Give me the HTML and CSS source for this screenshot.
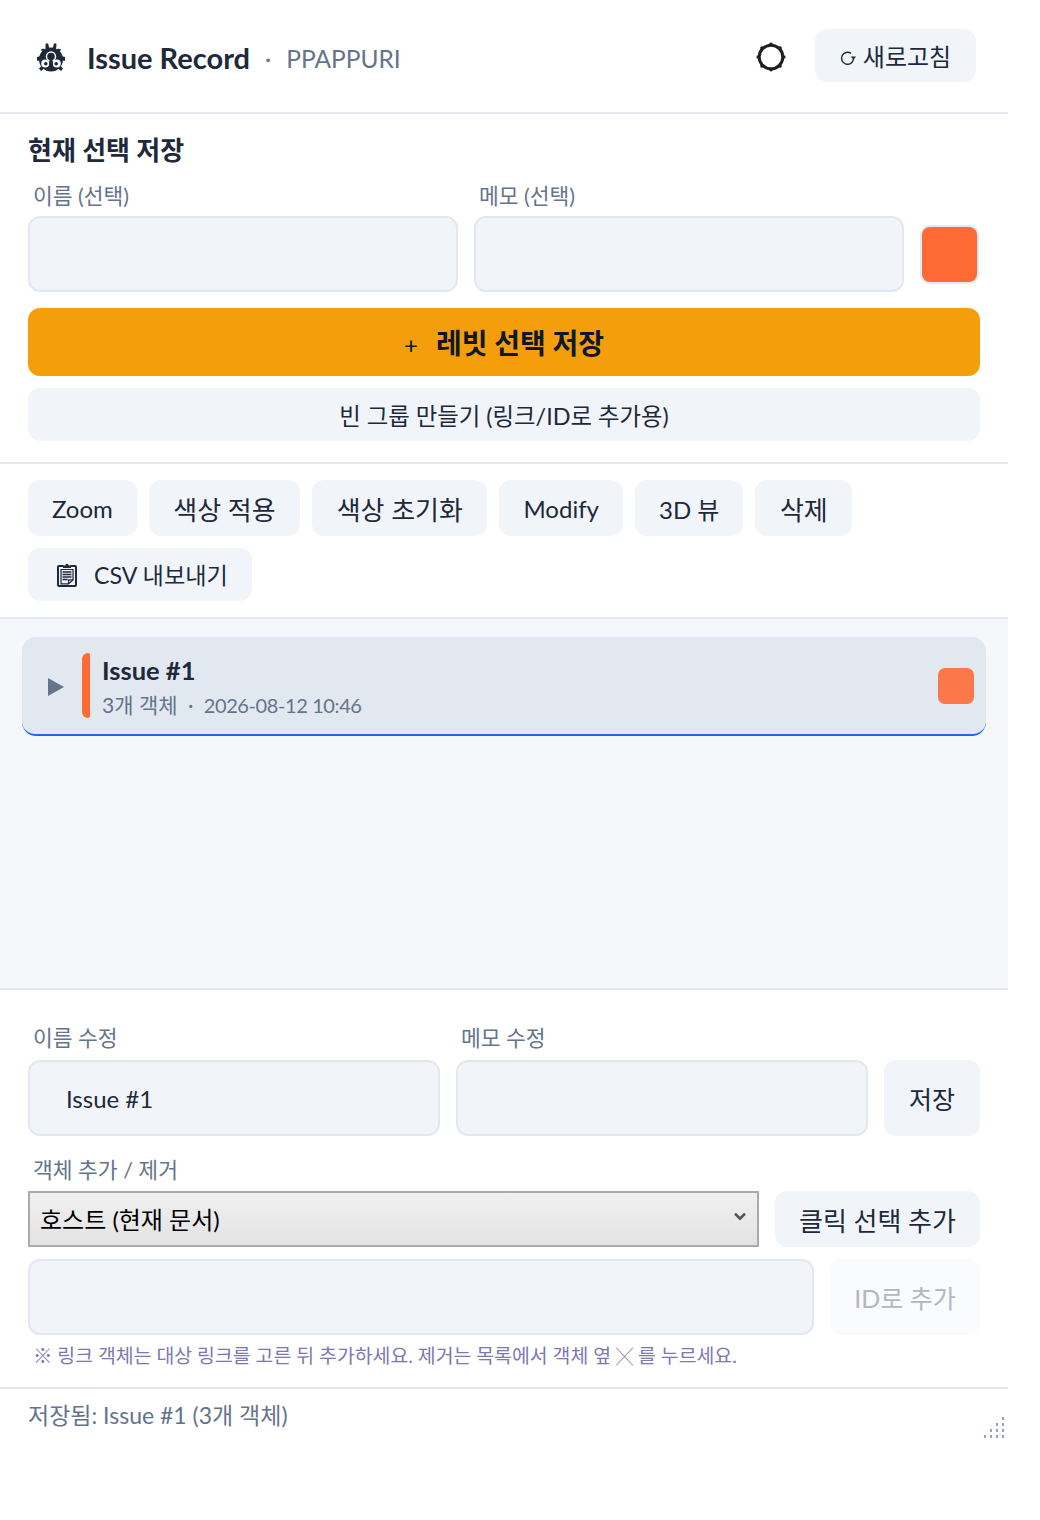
FILE: index.html
```html
<!DOCTYPE html>
<html lang="ko">

<head>
  <meta charset="utf-8">
  <title>Issue Record</title>
  <link rel="stylesheet" href="styles.css">
</head>

<body>
  <div id="panel">
    <header class="app-header">
      <svg class="bug-icon" viewBox="0 0 30 30" fill="#1e293b">
        <circle cx="15" cy="16.500" r="12" />
        <circle cx="11" cy="1.800" r="1.500" />
        <circle cx="19" cy="1.800" r="1.500" />
        <path d="M9.500 2.500h3l1 3h3l1-3h3l-1 6h-10z" />
        <path d="M5 6.500l3-1 2 3-3 2zM25 6.500l-3-1-2 3 3 2zM1 14l4-1 1 4-5 1zM29 14l-4-1-1 4 5 1zM3 25.500l3-3 2 3-3 2.500zM27 25.500l-3-3-2 3 3 2.500z" />
        <g fill="#fff">
          <circle cx="9.200" cy="20.500" r="4" />
          <circle cx="20.800" cy="20.500" r="4" />
          <circle cx="15" cy="13.500" r="5.200" />
        </g>
        <circle cx="15" cy="13.500" r="3.800" />
        <path d="M13.500 14h3v13h-3z" />
        <circle cx="9.800" cy="20.800" r="1.800" />
        <circle cx="20.200" cy="20.800" r="1.800" />
      </svg>
      <span class="app-title">Issue Record</span>
      <span class="app-dot">·</span>
      <span class="app-doc">PPAPPURI</span>
      <svg class="theme-icon" viewBox="0 0 30 30" fill="none">
        <circle cx="15" cy="15" r="11.800" stroke="#1f1f1f" stroke-width="3" />
        <g fill="#1f1f1f">
          <circle cx="15" cy="2.200" r="1.800" />
          <circle cx="24.050" cy="5.950" r="1.800" />
          <circle cx="27.800" cy="15" r="1.800" />
          <circle cx="24.050" cy="24.050" r="1.800" />
          <circle cx="15" cy="27.800" r="1.800" />
          <circle cx="5.950" cy="24.050" r="1.800" />
          <circle cx="2.200" cy="15" r="1.800" />
          <circle cx="5.950" cy="5.950" r="1.800" />
        </g>
      </svg>
      <button class="btn refresh-btn">
        <svg class="refresh-icon" viewBox="0 0 16 16" fill="none" stroke="#1e293b" stroke-width="1.400">
          <path d="M13.500 9A6 6 0 1 1 11 3.400" />
          <path d="M10.800 6.600H16L13.500 10z" fill="#1e293b" stroke="none" />
        </svg>
        새로고침
      </button>
    </header>

    <section class="save-section">
      <h2 class="section-title">현재 선택 저장</h2>
      <div class="field-row">
        <label class="field">
          <span class="field-label">이름 (선택)</span>
          <input type="text" class="text-input">
        </label>
        <label class="field">
          <span class="field-label">메모 (선택)</span>
          <input type="text" class="text-input">
        </label>
        <span class="color-swatch"></span>
      </div>
      <button class="btn primary-btn"><span class="plus">+</span>레빗 선택 저장</button>
      <button class="btn group-btn">빈 그룹 만들기 (링크/ID로 추가용)</button>
    </section>

    <section class="toolbar">
      <button class="btn tool-btn tool-latin">Zoom</button>
      <button class="btn tool-btn">색상 적용</button>
      <button class="btn tool-btn">색상 초기화</button>
      <button class="btn tool-btn tool-latin">Modify</button>
      <button class="btn tool-btn tool-latin">3D 뷰</button>
      <button class="btn tool-btn">삭제</button>
      <button class="btn tool-btn csv-btn">
        <svg class="clip-icon" viewBox="0 0 20 24" fill="none" stroke="#1e293b" stroke-width="2">
          <path d="M6.500 3H2a1 1 0 0 0-1 1v18a1 1 0 0 0 1 1h16a1 1 0 0 0 1-1V4a1 1 0 0 0-1-1h-4.500" />
          <path d="M6 5h8V2.400h-2.300a1.700 1.700 0 0 0-3.400 0H6z" fill="#1e293b" stroke="none" />
          <path d="M4 6.500h12v10.500l-4.500 3.800H4z" stroke-width="1.200" />
          <path d="M5.500 9h9M5.500 11.500h9M5.500 14h9M5.500 16.500h5" stroke-width="1.300" />
          <path d="M11.500 20.800v-4h4.500" stroke-width="1.200" />
        </svg>
        CSV 내보내기
      </button>
    </section>

    <section class="issue-list">
      <article class="issue-card">
        <span class="issue-arrow"></span>
        <span class="issue-bar"></span>
        <div class="issue-text">
          <div class="issue-name">Issue #1</div>
          <div class="issue-meta">3개 객체 <span class="meta-dot">·</span> <span class="issue-date">2026-08-12 10:46</span></div>
        </div>
        <span class="issue-swatch"></span>
      </article>
    </section>

    <section class="edit-section">
      <div class="edit-row">
        <label class="field">
          <span class="field-label edit-label">이름 수정</span>
          <input type="text" class="text-input name-input" value="Issue #1">
        </label>
        <label class="field">
          <span class="field-label edit-label">메모 수정</span>
          <input type="text" class="text-input">
        </label>
        <button class="btn save-btn">저장</button>
      </div>
      <div class="field-label object-label">객체 추가 / 제거</div>
      <div class="select-row">
        <div class="select-wrap">
          <select class="doc-select">
            <option>호스트 (현재 문서)</option>
          </select>
          <svg class="select-chevron" viewBox="0 0 12 8" fill="none" stroke="#555" stroke-width="2.600">
            <path d="M1 1.200l5 5 5-5" />
          </svg>
        </div>
        <button class="btn pick-btn">클릭 선택 추가</button>
      </div>
      <div class="id-row">
        <input type="text" class="text-input id-input">
        <button class="btn id-btn" disabled>ID로 추가</button>
      </div>
      <p class="hint">※ 링크 객체는 대상 링크를 고른 뒤 추가하세요. 제거는 목록에서 객체 옆 <span class="hint-x">╳</span> 를 누르세요.</p>
    </section>

    <footer class="status-bar">저장됨: Issue #1 (3개 객체)</footer>
    <svg class="resize-grip" viewBox="0 0 22 22" fill="#94a3c4">
      <path d="M19 1h2v3h-2zM19 7h2v3h-2zM13 7h2v3h-2zM19 13h2v3h-2zM13 13h2v3h-2zM7 13h2v3H7zM19 19h2v3h-2zM13 19h2v3h-2zM7 19h2v3H7zM1 19h2v3H1z" />
    </svg>
  </div>
</body>

</html>
```

FILE: styles.css
```css
* {
  box-sizing: border-box;
}

body {
  margin: 0;
  background-color: #FFF;
  color: #1E293B;
  font-family: Lato, "Noto Sans CJK KR", sans-serif;
}

#panel {
  position: relative;
  width: 1008px;
  height: 1520px;
}

button,
input,
select {
  font-family: inherit;
}

.btn {
  border: none;
  border-radius: 12px;
  background-color: #F1F5F9;
  color: #1E293B;
  font-size: 24px;
  padding: 0;
}

/* header */
.app-header {
  display: flex;
  align-items: center;
  height: 114px;
  padding: 0 32px 0 36px;
  border-bottom: 2px solid #E2E8F0;
}

.bug-icon {
  width: 30px;
  height: 30px;
  margin-right: 21px;
  margin-top: 3px;
}

.app-title {
  padding-top: 2px;
  font-size: 29px;
  font-weight: 700;
}

.app-dot {
  margin: 0 15px;
  padding-top: 2px;
  font-size: 24px;
  color: #64748B;
}

.app-doc {
  padding-top: 4px;
  font-size: 24.500px;
  color: #64748B;
}

.theme-icon {
  width: 30px;
  height: 30px;
  margin-left: auto;
  margin-right: 29px;
  margin-top: 2px;
}

.refresh-btn {
  display: flex;
  align-items: center;
  justify-content: center;
  width: 161px;
  height: 53px;
  margin-top: -1px;
}

.refresh-icon {
  width: 16px;
  height: 16px;
  margin-right: 7px;
  margin-top: 4px;
}

/* save section */
.save-section {
  padding: 16px 28px 21px;
  border-bottom: 2px solid #E2E8F0;
}

.section-title {
  margin: 0;
  font-size: 26px;
  font-weight: 700;
  line-height: 40px;
}

.field-row,
.edit-row {
  display: flex;
  align-items: flex-end;
  gap: 16px;
}

.field-row {
  margin-top: 11px;
}

.field {
  display: flex;
  flex-direction: column;
  flex: 1;
  min-width: 0;
}

.field-label {
  display: block;
  height: 35px;
  padding-left: 5px;
  font-size: 21.500px;
  line-height: 30px;
  color: #64748B;
}

.edit-label {
  height: 37px;
}

.text-input {
  width: 100%;
  height: 76px;
  padding: 0 36px;
  border: 2px solid #E2E8F0;
  border-radius: 12px;
  background-color: #F1F5F9;
  color: #1E293B;
  font-size: 24px;
}

.color-swatch {
  flex: none;
  width: 59px;
  height: 59px;
  margin: 0 1px 8px 0;
  border: 2px solid #E2E8F0;
  border-radius: 10px;
  background-color: #FF6B35;
}

.primary-btn {
  display: block;
  width: 100%;
  height: 68px;
  margin-top: 16px;
  background-color: #F59E0B;
  color: #0F172A;
  font-size: 28px;
  font-weight: 700;
}

.plus {
  margin-right: 18px;
  font-size: 24px;
  font-weight: 400;
}

.group-btn {
  display: block;
  width: 100%;
  height: 53px;
  margin-top: 12px;
  font-size: 23.400px;
}

/* toolbar */
.toolbar {
  display: flex;
  flex-wrap: wrap;
  gap: 12px;
  padding: 16px 28px;
  border-bottom: 2px solid #E2E8F0;
}

.tool-btn {
  height: 56px;
  padding: 0 24.500px;
  font-size: 26px;
}

.tool-latin {
  padding: 0 24px;
  font-size: 24px;
}

.csv-btn {
  display: flex;
  align-items: center;
  height: 53px;
  padding: 0 24px 2px 29px;
  font-size: 23.200px;
}

.clip-icon {
  width: 20px;
  height: 24px;
  margin-right: 17px;
  margin-top: 2px;
}

/* issue list */
.issue-list {
  height: 371px;
  padding: 18px 22px;
  background-color: #F5F7FB;
  border-bottom: 2px solid #E2E8F0;
}

.issue-card {
  display: flex;
  align-items: center;
  height: 99px;
  padding: 0 12px 0 26px;
  border-bottom: 2px solid #2563EB;
  border-radius: 14px;
  background-color: #E2E8F0;
}

.issue-arrow {
  width: 0;
  height: 0;
  margin-top: 2px;
  margin-right: 18px;
  border-top: 9px solid transparent;
  border-bottom: 9px solid transparent;
  border-left: 16px solid #64748B;
}

.issue-bar {
  width: 8px;
  height: 65px;
  margin-right: 12px;
  border-radius: 6px 2px 2px 6px;
  background-color: #FF6B35;
}

.issue-text {
  flex: 1;
  padding-top: 1px;
}

.issue-name {
  font-size: 25.500px;
  font-weight: 700;
  line-height: 36px;
}

.issue-meta {
  margin-top: 2px;
  font-size: 21px;
  line-height: 30px;
  color: #64748B;
}

.meta-dot {
  margin: 0 5px;
}

.issue-date {
  font-size: 20px;
  letter-spacing: -0.4px;
}

.issue-swatch {
  width: 36px;
  height: 36px;
  border-radius: 7px;
  background-color: #FF6B35;
  opacity: 0.9;
}

/* edit section */
.edit-section {
  padding: 33px 28px 0;
}

.save-btn {
  flex: none;
  width: 96px;
  height: 76px;
  font-size: 25px;
}

.object-label {
  margin-top: 19px;
  height: 36px;
}

.select-row,
.id-row {
  display: flex;
  gap: 16px;
}

.select-wrap {
  position: relative;
  flex: 1;
}

.doc-select {
  display: block;
  width: 100%;
  height: 56px;
  padding: 0 10px;
  border: 2px solid #AAA;
  border-radius: 0;
  appearance: none;
  background: linear-gradient(#F0F0F0, #E3E3E3);
  color: #000;
  font-size: 24px;
}

.select-chevron {
  position: absolute;
  top: 21px;
  right: 13px;
  width: 12px;
  height: 9px;
}

.pick-btn {
  flex: none;
  width: 205px;
  height: 56px;
  font-size: 26px;
}

.id-row {
  margin-top: 12px;
}

.id-input {
  flex: 1;
  width: auto;
}

.id-btn {
  flex: none;
  width: 150px;
  height: 76px;
  background-color: #FAFBFD;
  color: #B5B7BF;
  font-size: 25px;
}

.hint {
  margin: 7px 0 0;
  padding-left: 5px;
  font-size: 19.400px;
  line-height: 28px;
  color: #7C78B0;
}

.hint-x {
  font-size: 17px;
}

/* status */
.status-bar {
  margin-top: 16px;
  padding: 8px 28px;
  border-top: 2px solid #E2E8F0;
  font-size: 23px;
  line-height: 36px;
  color: #64748B;
}

.resize-grip {
  position: absolute;
  top: 1416px;
  left: 983px;
  width: 22px;
  height: 22px;
}
```
